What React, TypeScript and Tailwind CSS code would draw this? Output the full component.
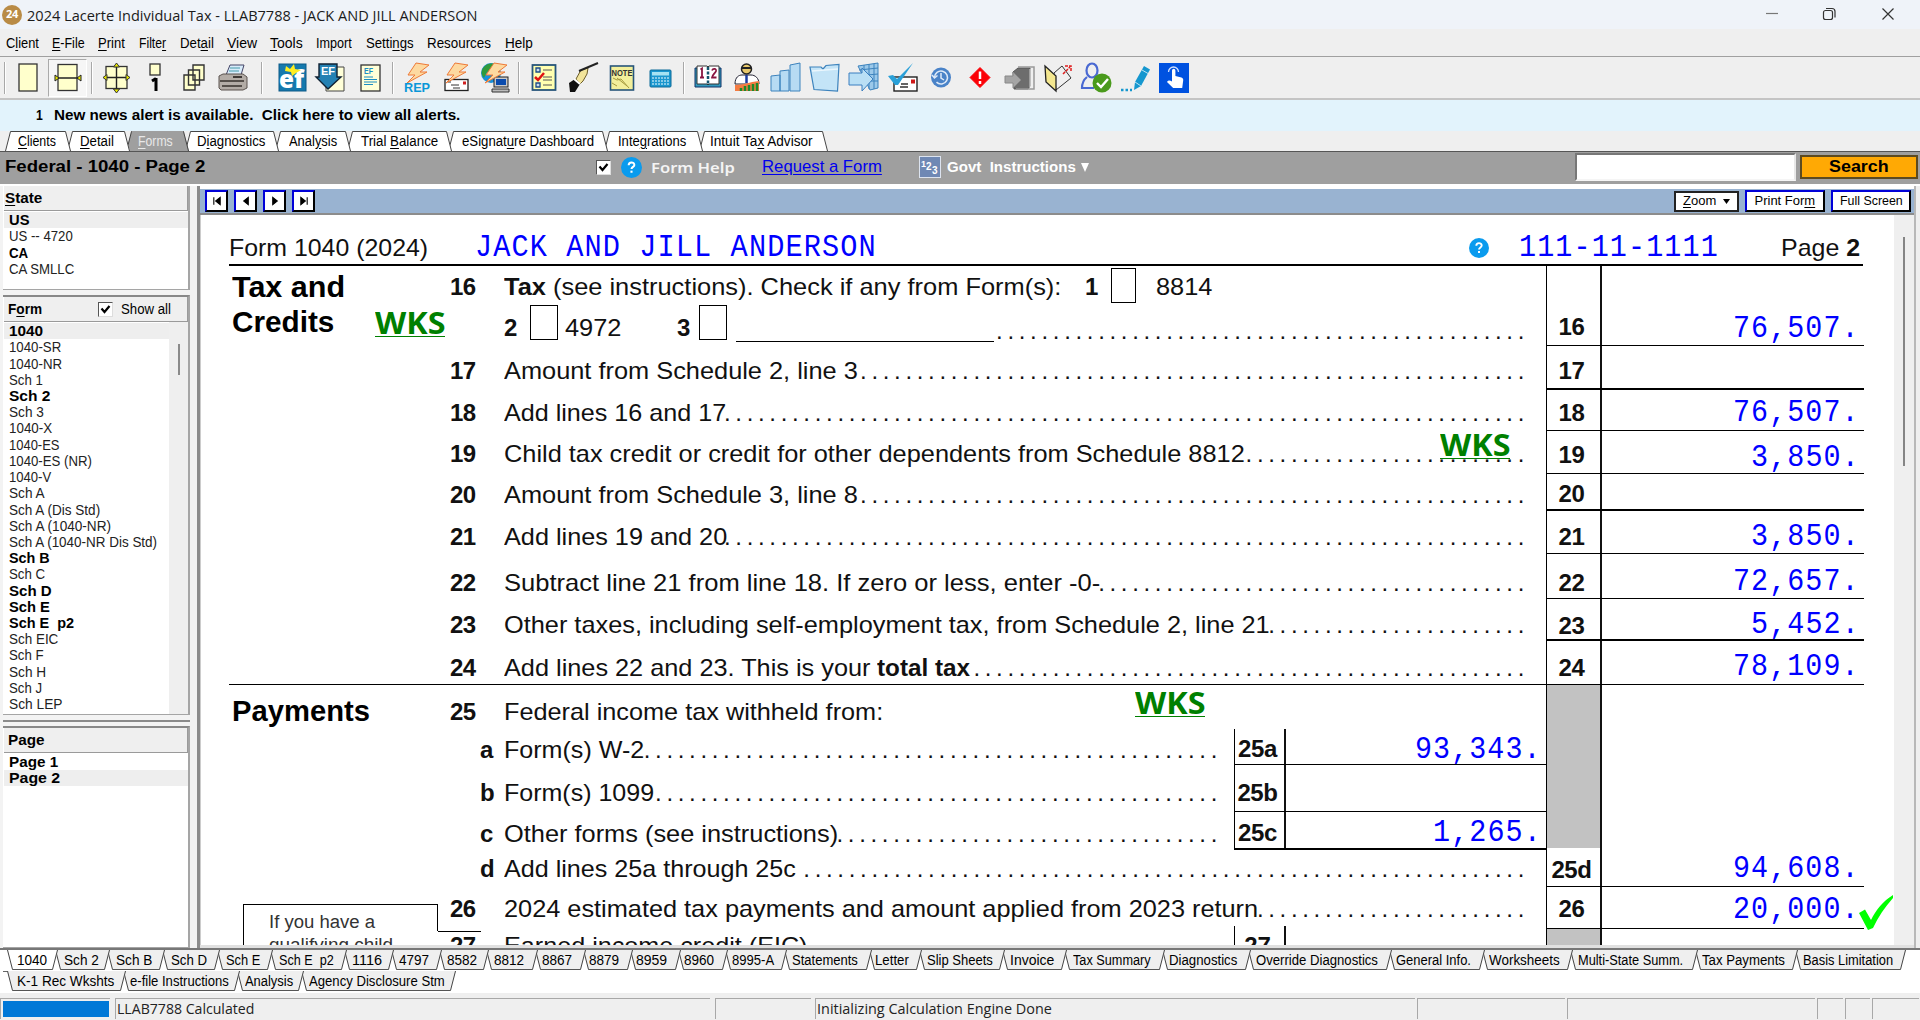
import { useLayoutEffect, useRef, useState, type ReactNode } from "react";

const UI = "font-['Liberation_Sans',Arial,sans-serif]";
const MONO = "font-['Liberation_Mono','Courier_New',monospace] text-[31px] leading-[24px] text-[#0000ff] tracking-[1.2px]";

/* Text stretched or condensed horizontally to fill the width of its box. */
function Fit({ className = "", children }: { className?: string; children: ReactNode }) {
  const outer = useRef<HTMLSpanElement>(null);
  const inner = useRef<HTMLSpanElement>(null);
  const [scale, setScale] = useState(1);
  useLayoutEffect(() => {
    if (outer.current && inner.current && inner.current.offsetWidth > 0) {
      setScale(outer.current.offsetWidth / inner.current.offsetWidth);
    }
  }, []);
  return (
    <span ref={outer} className={"block shrink-0 whitespace-pre " + className}>
      <span ref={inner} className="inline-block origin-left" style={{ transform: `scaleX(${scale})` }}>
        {children}
      </span>
    </span>
  );
}

/* "&" marks the mnemonic letter. */
function Mn({ t }: { t: string }) {
  const i = t.indexOf("&");
  if (i < 0) return <>{t}</>;
  return (
    <>
      {t.slice(0, i)}
      <span className="underline underline-offset-2">{t[i + 1]}</span>
      {t.slice(i + 2)}
    </>
  );
}

/* ---------- title and menu ---------- */

function TitleBar() {
  return (
    <div className="flex h-[29px] shrink-0 items-center bg-[#eff3f9] pl-[2px]">
      <div className="flex size-[20px] items-center justify-center rounded-full bg-[#b98b46] font-['Open_Sans'] text-[11px] font-bold tracking-tight text-white">24</div>
      <Fit className="ml-[5px] w-[450px] font-['Open_Sans'] text-[15px] leading-[18px] text-[#1b1b1b]">2024 Lacerte Individual Tax - LLAB7788 - JACK AND JILL ANDERSON</Fit>
      <svg className="mr-[21px] mb-[2px] ml-auto h-[16px] w-[134px]" viewBox="0 0 134 16" fill="none" stroke="#333" strokeWidth="1.2">
        <path d="M1 7.5h12" stroke="#777" />
        <rect x="58.500" y="4.500" width="9" height="9" rx="2" />
        <path d="M61 2.500h6a3 3 0 0 1 3 3v6" />
        <path d="M117.500 2.500l11 11M128.500 2.500l-11 11" />
      </svg>
    </div>
  );
}

const MENU = [
  ["C&lient", "ml-[6px] w-[33px]"],
  ["&E-File", "ml-[13px] w-[33px]"],
  ["&Print", "ml-[13px] w-[27px]"],
  ["Filte&r", "ml-[14px] w-[27px]"],
  ["Det&ail", "ml-[14px] w-[34px]"],
  ["&View", "ml-[13px] w-[30px]"],
  ["&Tools", "ml-[13px] w-[33px]"],
  ["Import", "ml-[13px] w-[36px]"],
  ["Setti&ngs", "ml-[14px] w-[48px]"],
  ["Resources", "ml-[13px] w-[64px]"],
  ["&Help", "ml-[14px] w-[28px]"],
];

/* ---------- toolbar ---------- */

function Ic({ children, className = "w-[39px]" }: { children: ReactNode; className?: string }) {
  return (
    <div className={"flex h-[40px] shrink-0 items-center justify-center " + className}>
      <svg className="size-[30px] overflow-visible" viewBox="0 0 30 30" fill="none">
        {children}
      </svg>
    </div>
  );
}
const Sep = ({ className }: { className: string }) => (
  <div className={"flex h-[32px] shrink-0 justify-center " + className}>
    <div className="w-px bg-[#a8a8a8]" />
    <div className="w-px bg-white" />
  </div>
);
const BOLT = "M14 0L27 2L18 9L25 9L5 20L13 12L6 12Z";

function Toolbar() {
  return (
    <div className="flex h-[42px] shrink-0 items-center border-t border-[#a0a0a0] bg-[#efefef]">
      <Sep className="w-[9px]" />
      <Ic className="w-[38px]">
        <rect x="6" y="1" width="18" height="27" fill="#ffffcc" stroke="#333" strokeWidth="1.3" />
      </Ic>
      <div className="ml-px flex h-[38px] items-center border border-r-white border-b-white border-l-[#aaa] border-t-[#aaa] bg-[#f6f6f6]">
        <Ic className="w-[37px]">
          <rect x="5" y="1.500" width="19" height="26" fill="#ffffcc" stroke="#333" strokeWidth="1.3" />
          <path d="M3 15h24" stroke="#222" strokeWidth="1.5" />
          <path d="M2 12l4 3-4 3zM28 12l-4 3 4 3z" fill="#e8e800" stroke="#222" />
        </Ic>
      </div>
      <Sep className="w-[9px]" />
      <Ic>
        <rect x="5" y="3.500" width="21" height="22" fill="#ffffcc" stroke="#333" strokeWidth="1.3" />
        <path d="M3 14.500h24M15.500 2v26" stroke="#222" strokeWidth="1.4" />
        <path d="M2 14.500l4-3v6zM29 14.500l-4-3v6zM15.500 0l3 4h-6zM15.500 30l3-4h-6z" fill="#e8e800" stroke="#333" />
      </Ic>
      <Ic>
        <rect x="10" y="1" width="10" height="11" fill="#ffffcc" stroke="#333" strokeWidth="1.3" />
        <path d="M16 15v13M12 18l4-2.500" stroke="#000" strokeWidth="3" />
      </Ic>
      <Ic>
        <path d="M14 2h11v15H14zM9.500 7h11v15h-11zM5 12h11v15H5z" fill="#ffffcc" stroke="#333" strokeWidth="1.4" />
      </Ic>
      <Ic>
        <path d="M8 12l4-10h14l-3 10z" fill="#d8ecfa" stroke="#446" />
        <path d="M12 5h10M11 8h10" stroke="#49a" />
        <path d="M1 13l4-2h20l4 3v11l-4 2H3l-2-2z" fill="#b3aca6" stroke="#5a534e" />
        <path d="M2 18h24M4 23h20" stroke="#37312d" strokeWidth="1.6" />
        <path d="M15 14h9" stroke="#3e3835" strokeWidth="2" />
      </Ic>
      <Sep className="w-[20px]" />
      <Ic>
        <rect x="2" y="1" width="27" height="27" fill="#1579ad" stroke="#0d5a88" />
        <text x="2" y="25" fontFamily="Open Sans" fontWeight="800" fontSize="24" fill="#fff" textLength="25" lengthAdjust="spacingAndGlyphs">ef</text>
        <path d="M9 3l4 3 4-5 1 5 6 1-5 3-4 3-1-4-6-1z" fill="#ffee22" />
      </Ic>
      <Ic>
        <path d="M14 4h14v24H10V12z" fill="#ffffd8" stroke="#444" />
        <path d="M3 1h18v13h4L12 26 0 14h3z" fill="#2481b3" stroke="#123" strokeWidth="1.4" />
        <text x="5" y="12" fontFamily="Liberation Sans" fontWeight="700" fontSize="11" fill="#fff" textLength="14">EF</text>
      </Ic>
      <Ic>
        <rect x="6" y="2" width="19" height="26" fill="#ffffd8" stroke="#333" strokeWidth="1.3" />
        <text x="9" y="11" fontFamily="Liberation Sans" fontWeight="700" fontSize="8.500" fill="#1b8ec4" textLength="9" lengthAdjust="spacingAndGlyphs">EF</text>
        <path d="M9 14h9M9 16.500h13M9 19h13M9 21.500h9" stroke="#1b8ec4" strokeWidth="1.2" />
      </Ic>
      <Sep className="w-[8px]" />
      <Ic>
        <path d={BOLT} fill="#fdd9a0" stroke="#ee7a38" />
        <text x="2" y="28.500" fontFamily="Liberation Sans" fontWeight="700" fontSize="13" fill="#0a97d8" textLength="26" lengthAdjust="spacingAndGlyphs">REP</text>
      </Ic>
      <Ic>
        <rect x="4" y="16.500" width="23" height="11" fill="#fff" stroke="#222" strokeWidth="1.3" />
        <path d="M7 19h3M10 22h8M12 25h7" stroke="#333" />
        <rect x="22" y="18.500" width="3" height="3" fill="#d02020" />
        <path d={BOLT} fill="#fdd9a0" stroke="#ee7a38" />
      </Ic>
      <Ic>
        <circle cx="11" cy="10" r="10" fill="#1890d8" />
        <path d="M3 5c4-6 11-5 14-3l-5 4-5 3-3 6C1 12 1 8 3 5z" fill="#2f9a3b" />
        <rect x="14" y="14" width="14" height="10" fill="#c9c9c9" stroke="#222" />
        <rect x="16" y="16" width="10" height="6" fill="#0b4cae" />
        <path d="M12 26h17v3H12z" fill="#bbb" stroke="#333" />
        <path d={BOLT} fill="#fdd9a0" stroke="#ee7a38" />
      </Ic>
      <Sep className="w-[10px]" />
      <Ic>
        <rect x="3.500" y="2" width="23" height="25" fill="#ffffb0" stroke="#27557a" strokeWidth="1.8" />
        <path d="M7 5h4v4H7zM7 20h4v4H7z" fill="#cde" stroke="#1c4c86" strokeWidth="1.3" />
        <path d="M14 7h9M14 14h9M14 17h9M14 22h9" stroke="#555" />
        <path d="M6 14l3 3 6-7" stroke="#e01010" strokeWidth="2.500" />
      </Ic>
      <Ic>
        <path d="M1 20l6-4 5 5-5 8H2z" fill="#111" />
        <path d="M8 16l5-9 7-2-1 6-4 7-3 3z" fill="#f2e49b" stroke="#6b5c28" />
        <path d="M6 16l6 5" stroke="#fff" strokeWidth="2" />
        <path d="M11 8l19-8" stroke="#222" strokeWidth="2" />
      </Ic>
      <Ic>
        <rect x="3.500" y="3" width="23" height="24" fill="#f3ef9b" stroke="#27557a" strokeWidth="1.6" />
        <text x="4.500" y="13" fontFamily="Liberation Sans" fontWeight="700" fontSize="9.500" fill="#333" textLength="21" lengthAdjust="spacingAndGlyphs">NOTE</text>
        <path d="M6 15l4 2 4-1 8 9M10 15l10 8M5 20l5 3" stroke="#a69b3d" />
      </Ic>
      <Ic>
        <rect x="4" y="7" width="21" height="17" rx="1" fill="#1b97cf" stroke="#0d6a98" />
        <rect x="6" y="9" width="17" height="3.500" fill="#a5e2f2" />
        <path d="M6 15h17M6 18h17M6 21h17" stroke="#a9dcf0" strokeWidth="1.500" strokeDasharray="2 1" />
      </Ic>
      <Sep className="w-[8px]" />
      <Ic>
        <path d="M2 5h26v19H2z" fill="#3199bd" stroke="#136" />
        <path d="M4 3h10l1 1 1-1h10v18H16l-1 1-1-1H4z" fill="#fff" stroke="#333" />
        <path d="M15 4v18" stroke="#14556e" strokeWidth="2.500" strokeDasharray="3 1.500" />
        <path d="M7.500 6.500l1.500-1v9M7 14.500h4M19 7.500c1-2.500 4.500-2 4 .5-.5 2-4 4-4 6.500h4.500" stroke="#8a1540" strokeWidth="1.800" />
      </Ic>
      <Ic>
        <circle cx="14.500" cy="6" r="5" fill="#e8c86a" stroke="#222" strokeWidth="1.500" />
        <path d="M10 5h9" stroke="#222" strokeWidth="2" />
        <path d="M3 21c0-7 4-9 7-9h9c4 0 8 3 8 9z" fill="#fff" stroke="#223" />
        <path d="M14.500 12v8" stroke="#1c3da0" strokeWidth="2.500" />
        <path d="M3 22c9 0 14-3 24-4v10H3z" fill="#f47b42" />
        <path d="M9 28v-3M13 28v-5M17 28v-6M21 28v-7M25 28v-8" stroke="#1d8a2a" strokeWidth="2.500" />
      </Ic>
      <Ic>
        <path d="M0 13l9-1v16H0zM9 8l9-1v21H9zM19 2l10-2v28H19z" fill="#b7dbf3" stroke="#3d83bd" />
      </Ic>
      <Ic>
        <path d="M0 4h11l2 2 3-3.500L29 1.500 27.500 28 4 26.500z" fill="#c4e4f7" stroke="#3d83bd" strokeWidth="1.200" />
        <path d="M2 8l26-2" stroke="#eaf6fd" strokeWidth="1.500" />
      </Ic>
      <Ic>
        <path d="M9 3l20-3v25l-8 2z" fill="#9cc9ea" stroke="#3d83bd" />
        <path d="M15 2v10M20 1v25M25 1v25M10 7l19-2M18 12l11-1M22 18h7" stroke="#3d83bd" />
        <path d="M0 10h13V5l11 11-11 12v-6H0z" fill="#b9dff5" stroke="#3a7fc0" />
      </Ic>
      <Ic>
        <rect x="6" y="14" width="23" height="14" fill="#fff" stroke="#222" strokeWidth="1.4" />
        <rect x="23" y="16.500" width="4" height="4" fill="#d01818" />
        <path d="M9 17h4M13 21h7M12 24h8" stroke="#333" strokeWidth="1.3" />
        <path d="M0 13l5-1 4 4L25 0 10 22H7z" fill="#2aa0d8" />
      </Ic>
      <Ic>
        <circle cx="14" cy="14.500" r="10" fill="#4a83c8" />
        <path d="M7.500 14.500a6.500 6.500 0 1 1 2 4.700" stroke="#dfeaf8" strokeWidth="1.600" />
        <path d="M14 10v5l3 2M5 12l2.500 3 3-2.500" stroke="#dfeaf8" strokeWidth="1.500" />
      </Ic>
      <Ic>
        <path d="M14 4.500l10 10L14 24.500 4 14.500z" fill="#fb0207" stroke="#fb0207" strokeLinejoin="round" />
        <path d="M14 8.500v7.500M14 18v3" stroke="#fff" strokeWidth="2.500" />
      </Ic>
      <Ic>
        <path d="M8 9l5-4h12v18l-2 3H9z" fill="#6d6d6d" stroke="#555" />
        <path d="M13 4h16v22H11" stroke="#999" strokeWidth="1.500" />
        <path d="M25 6v18" stroke="#ddd" />
        <path d="M0 13h8V9l8 8-8 8v-5H0z" fill="#a5a5a5" stroke="#888" />
      </Ic>
      <Ic>
        <path d="M10 10l8-7 9 12-15 12z" fill="#f0f0f0" stroke="#333" />
        <path d="M1 3l11 10v15L2 19z" fill="#f4e78f" stroke="#222" strokeWidth="1.300" />
        <path d="M19 11l7-7M21 3h6v6" stroke="#e02020" strokeWidth="1.500" strokeDasharray="3 1" />
      </Ic>
      <Ic className="w-[38px]">
        <ellipse cx="10" cy="7.500" rx="5.500" ry="7" stroke="#4a69d2" strokeWidth="2.200" />
        <path d="M5 14c-5 4-5 8-5 11h12" stroke="#4a69d2" strokeWidth="2.200" />
        <circle cx="20" cy="20" r="9.500" fill="#4a9a1c" />
        <path d="M15 20l4 4 7-8" stroke="#fff" strokeWidth="2.400" />
      </Ic>
      <Ic>
        <path d="M14 19L23 3l6 3.500L20 23l-7 4z" fill="#1597cf" />
        <path d="M14 19l6 4M21 7l6 3.500" stroke="#bfe6f6" />
        <path d="M0 27h11" stroke="#1597cf" strokeWidth="2.500" strokeDasharray="2.500 2" />
      </Ic>
      <Ic className="w-[38px]">
        <rect x="0" y="0" width="30" height="30" fill="#0052e0" />
        <path d="M13 17V7.500a1.700 1.700 0 0 1 3.400 0V13l6 1.500c1.500.5 2 1.500 1.800 3l-1 7.500h-9L8 19c1-2 3-2 5-.5z" fill="#fff" />
        <path d="M9.500 9a5 5 0 1 1 10 0" stroke="#cfe0ff" strokeWidth="1.300" />
      </Ic>
    </div>
  );
}

/* ---------- top tabs and form header strip ---------- */

const TOP_TABS = [
  ["&Clients", "w-[62px] pl-[13px]", "w-[38px]"],
  ["&Detail", "w-[59px] pl-[13px]", "w-[34px]"],
  ["&Forms", "w-[59px] pl-[12px]", "w-[35px]"],
  ["D&iagnostics", "w-[90px] pl-[12px]", "w-[68px]"],
  ["Anal&ysis", "w-[72px] pl-[14px]", "w-[48px]"],
  ["Trial &Balance", "w-[101px] pl-[14px]", "w-[77px]"],
  ["eSignat&ure Dashboard", "w-[156px] pl-[14px]", "w-[132px]"],
  ["Inte&grations", "w-[95px] pl-[14px]", "w-[68px]"],
  ["Intuit Ta&x Advisor", "w-[125px] pl-[11px]", "w-[103px]"],
];

function TopTabs() {
  return (
    <div className="flex h-[21px] shrink-0 border-b border-[#555] bg-[#efefef] pl-[5px]">
      {TOP_TABS.map(([label, slot, width], i) => {
        const active = i === 2;
        const fill = active ? "#9f9f9f" : "#ffffff";
        return (
          <div key={label} className={"relative flex h-[20px] shrink-0 items-center " + slot} style={{ zIndex: TOP_TABS.length - i }}>
            <div className="absolute inset-y-0 -right-[4px] left-0 flex">
              <svg className="h-[20px] w-[6px]" viewBox="0 0 6 20"><path d="M0 20L5.500 .5H6V20z" fill={fill} /><path d="M.5 20L5.500 .5H6" stroke="#444" fill="none" /></svg>
              <div className={"flex-1 border-t " + (active ? "border-[#9f9f9f] bg-[#9f9f9f]" : "border-[#444] bg-white")} />
              <svg className="h-[20px] w-[6px]" viewBox="0 0 6 20"><path d="M0 .5H.5L6 20H0z" fill={fill} /><path d="M0 .5H.5L5.500 20" stroke="#444" fill="none" /></svg>
            </div>
            <Fit className={"relative text-[14px] leading-[18px] " + width + (active ? " text-[#e8e8e8]" : " text-black")}>
              <Mn t={label} />
            </Fit>
          </div>
        );
      })}
    </div>
  );
}

function Help({ className }: { className: string }) {
  return (
    <svg className={"shrink-0 " + className} viewBox="0 0 20 20">
      <circle cx="10" cy="10" r="10" fill="#0a9bee" />
      <path d="M7.300 7.800c0-3.600 5.400-3.400 5.400-.3 0 1.800-2.700 2-2.700 4" fill="none" stroke="#fff" strokeWidth="1.900" />
      <rect x="9" y="13" width="2" height="2" fill="#fff" />
    </svg>
  );
}

function Check({ className }: { className: string }) {
  return (
    <div className={"size-[15px] shrink-0 border border-t-[#555] border-r-[#ddd] border-b-[#ddd] border-l-[#555] bg-white " + className}>
      <svg viewBox="0 0 13 13" className="size-[13px]"><path d="M2.500 5.500l3 3.500L10.500 3" fill="none" stroke="#000" strokeWidth="2.200" /></svg>
    </div>
  );
}

function FormStrip() {
  return (
    <div className="flex h-[32px] shrink-0 items-center bg-[#9f9f9f] pb-[2px] pl-[5px]">
      <Fit className="w-[201px] text-[16px] leading-[20px] font-bold">Federal - 1040 - Page 2</Fit>
      <Check className="ml-[390px]" />
      <Help className="ml-[10px] size-[21px]" />
      <Fit className="ml-[9px] w-[84px] font-['Noto_Sans'] text-[15px] leading-[20px] font-semibold text-[#f4f4f4]">Form Help</Fit>
      <Fit className="ml-[27px] w-[120px] text-[17px] leading-[20px] text-[#0000ee]">
        <span className="underline underline-offset-2">Request a Form</span>
      </Fit>
      <svg className="ml-[37px] size-[22px] shrink-0" viewBox="0 0 22 22">
        <rect x=".5" y=".5" width="21" height="21" fill="#6f88b4" stroke="#dce3ef" />
        <text x="2" y="11" fontFamily="Liberation Sans" fontWeight="700" fontSize="9" fill="#fff">1</text>
        <text x="7" y="14" fontFamily="Liberation Sans" fontWeight="700" fontSize="10" fill="#fff">2</text>
        <text x="13" y="17.500" fontFamily="Liberation Sans" fontWeight="700" fontSize="10" fill="#fff">3</text>
      </svg>
      <Fit className="ml-[6px] w-[129px] text-[14px] leading-[20px] font-bold text-white">{"Govt  Instructions"}</Fit>
      <svg className="ml-[5px] h-[9px] w-[8px]" viewBox="0 0 8 9"><path d="M0 0h8L4 9z" fill="#fff" /></svg>
      <div className="mr-[4px] ml-auto h-[28px] w-[221px] border-2 border-t-[#777] border-r-[#e8e8e8] border-b-[#f5f5f5] border-l-[#777] bg-white" />
      <div className="mr-[2px] flex h-[24px] w-[118px] items-center justify-center border-2 border-[#5c4a20] bg-[#ffa904]">
        <Fit className="w-[60px] text-[17px] leading-[18px] font-bold">Search</Fit>
      </div>
    </div>
  );
}

/* ---------- sidebar ---------- */

type Item = [label: string, width: string, bold?: boolean, selected?: boolean];

const STATES: Item[] = [
  ["US", "w-[20px]", true, true],
  ["US -- 4720", "w-[64px]"],
  ["CA", "w-[19px]", true],
  ["CA SMLLC", "w-[65px]"],
];

const FORMS: Item[] = [
  ["1040", "w-[34px]", true, true],
  ["1040-SR", "w-[52px]"],
  ["1040-NR", "w-[53px]"],
  ["Sch 1", "w-[34px]"],
  ["Sch 2", "w-[41px]", true],
  ["Sch 3", "w-[35px]"],
  ["1040-X", "w-[43px]"],
  ["1040-ES", "w-[50px]"],
  ["1040-ES (NR)", "w-[83px]"],
  ["1040-V", "w-[42px]"],
  ["Sch A", "w-[36px]"],
  ["Sch A (Dis Std)", "w-[91px]"],
  ["Sch A (1040-NR)", "w-[102px]"],
  ["Sch A (1040-NR Dis Std)", "w-[148px]"],
  ["Sch B", "w-[41px]", true],
  ["Sch C", "w-[36px]"],
  ["Sch D", "w-[43px]", true],
  ["Sch E", "w-[41px]", true],
  ["Sch E  p2", "w-[65px]", true],
  ["Sch EIC", "w-[49px]"],
  ["Sch F", "w-[35px]"],
  ["Sch H", "w-[37px]"],
  ["Sch J", "w-[33px]"],
  ["Sch LEP", "w-[53px]"],
];

const PAGES: Item[] = [
  ["Page 1", "w-[49px]", true],
  ["Page 2", "w-[51px]", true, true],
];

function List({ items, className = "" }: { items: Item[]; className?: string }) {
  return (
    <div className={"pt-px " + className}>
      {items.map(([label, width, bold, selected]) => (
        <div key={label} className={"flex h-[16.230px] items-center pl-[5px] " + (selected ? "bg-[#eeeeee]" : "")}>
          <Fit className={"text-[14px] leading-[16px] " + width + (bold ? " font-bold text-black" : " text-[#222]")}>{label}</Fit>
        </div>
      ))}
    </div>
  );
}

function PanelHead({ className = "", children }: { className?: string; children: ReactNode }) {
  return <div className={"flex h-[25px] shrink-0 items-center border-r border-b border-[#9a9a9a] bg-[#efefef] pt-px pl-[4px] " + className}>{children}</div>;
}

function Sidebar() {
  const panel = "flex shrink-0 flex-col border-r-2 border-b border-[#a5a5a5] bg-white ml-[3px] w-[187px] pl-px";
  return (
    <div className="w-[197px] shrink-0 bg-[#f3f3f3]">
      <div className={panel + " h-[104px]"}>
        <PanelHead className="pl-px">
          <Fit className="w-[37px] text-[14px] font-bold"><Mn t="&State" /></Fit>
        </PanelHead>
        <List items={STATES} />
      </div>
      <div className={panel + " mt-[5px] h-[420px] border-t-2 border-t-[#888]"}>
        <PanelHead>
          <Fit className="w-[34px] text-[14px] font-bold"><Mn t="F&orm" /></Fit>
          <Check className="ml-[56px]" />
          <Fit className="ml-[8px] w-[50px] text-[14px]">Show all</Fit>
        </PanelHead>
        <div className="flex min-h-0 flex-1">
          <List items={FORMS} className="w-[165px]" />
          <div className="flex flex-1 justify-center bg-[#efefef] pt-[22px]">
            <div className="h-[31px] w-[2px] bg-[#8a8a8a]" />
          </div>
        </div>
      </div>
      <div className="mt-[5px] ml-[3px] h-[2px] w-[187px] bg-[#8a8a8a]" />
      <div className={panel + " mt-[4px] h-[222px] border-t-2 border-t-[#888]"}>
        <PanelHead>
          <Fit className="w-[36px] text-[14px] font-bold">Pa<span className="underline">g</span>e</Fit>
        </PanelHead>
        <List items={PAGES} />
      </div>
    </div>
  );
}

/* ---------- tax form ---------- */

const NAV = ["M2 1v8M9 1L4 5l5 4z", "M8 1L3 5l5 4z", "M3 1l5 4-5 4z", "M2 1l5 4-5 4zM9 1v8"];

function NavBar() {
  const blue = "border-2 border-t-[#0000d8] border-r-black border-b-black border-l-[#0000d8]";
  return (
    <div className="flex h-[26px] shrink-0 items-center border-b-2 border-[#8c8c8c] bg-[#99b3d1] pl-[5px]">
      {NAV.map((d) => (
        <div key={d} className={"mr-[6px] flex h-[22px] w-[23px] items-center justify-center bg-white " + blue}>
          <svg className="size-[10px]" viewBox="0 0 11 10"><path d={d} fill="#000" stroke="#000" strokeWidth="1.200" /></svg>
        </div>
      ))}
      <div className="ml-auto flex h-[21px] w-[65px] items-center justify-center border-2 border-[#222] bg-white">
        <Fit className="w-[33px] text-[13px] leading-[16px]"><Mn t="&Zoom" /></Fit>
        <svg className="ml-[7px] h-[5px] w-[7px]" viewBox="0 0 7 5"><path d="M0 0h7L3.500 5z" /></svg>
      </div>
      <div className={"ml-[6px] flex h-[22px] w-[80px] items-center justify-center bg-white " + blue}>
        <Fit className="w-[61px] text-[13px] leading-[16px]"><Mn t="Print For&m" /></Fit>
      </div>
      <div className={"mr-[3px] ml-[6px] flex h-[22px] w-[80px] items-center justify-center bg-white " + blue}>
        <Fit className="w-[63px] text-[13px] leading-[16px]">Full Screen</Fit>
      </div>
    </div>
  );
}

function Wks({ className }: { className: string }) {
  return (
    <Fit className={"h-[27px] border-b border-[#008000] font-['Open_Sans'] text-[30px] leading-[25px] font-bold text-[#008000] " + className}>WKS</Fit>
  );
}

/* Dot leader: as many dots as the free width of the line holds. */
const DOT_PITCH = 11.34;
function Dots({ className = "mr-[17px]" }: { className?: string }) {
  const box = useRef<HTMLDivElement>(null);
  const [count, setCount] = useState(0);
  useLayoutEffect(() => {
    if (box.current) setCount(Math.floor((box.current.offsetWidth + 5) / DOT_PITCH));
  }, []);
  return (
    <div ref={box} className={"flex h-[24px] min-w-0 flex-1 justify-end text-[24px] leading-[24px] tracking-[4.670px] whitespace-nowrap " + className}>
      {".".repeat(count)}
    </div>
  );
}

function Row({ n, h, letter, children }: { n: string; h: string; letter?: boolean; children: ReactNode }) {
  return (
    <div className={"relative flex shrink-0 items-end " + h}>
      <span className={"w-[56px] shrink-0 font-bold " + (letter ? "pl-[32px]" : "pl-[2px] tracking-[-0.5px]")}>{n}</span>
      {children}
    </div>
  );
}

const Box = ({ className }: { className: string }) => <div className={"h-[35px] shrink-0 border-[1.500px] border-black bg-white " + className} />;

type Cell = { n: string; v?: string; h: string; np: string; vp?: string };

const CELLS_TOP: Cell[] = [
  { n: "16", v: "76,507.", h: "h-[80px] border-b", np: "pb-[6px]", vp: "pb-[4px]" },
  { n: "17", h: "h-[44px] border-b-2", np: "pb-[5px]" },
  { n: "18", v: "76,507.", h: "h-[41px] border-b", np: "pb-[5px]", vp: "pb-[5px]" },
  { n: "19", v: "3,850.", h: "h-[43px] border-b", np: "pb-[6px]", vp: "pb-[3px]" },
  { n: "20", h: "h-[37px] border-b-2", np: "pb-[3px]" },
  { n: "21", v: "3,850.", h: "h-[43px] border-b", np: "pb-[4px]", vp: "pb-[4px]" },
  { n: "22", v: "72,657.", h: "h-[45px] border-b", np: "pb-[3px]", vp: "pb-[4px]" },
  { n: "23", v: "5,452.", h: "h-[42px] border-b-2", np: "pb-[1px]", vp: "pb-[2px]" },
  { n: "24", v: "78,109.", h: "h-[44px] border-b", np: "pb-[4px]", vp: "pb-[5px]" },
];
const CELLS_BOTTOM: Cell[] = [
  { n: "25d", v: "94,608.", h: "h-[39px] border-b", np: "pb-[4px]", vp: "pb-[5px]" },
  { n: "26", v: "20,000.", h: "h-[42px] border-b", np: "pb-[7px]", vp: "pb-[6px]" },
];
const CELLS_SUB: Cell[] = [
  { n: "25a", v: "93,343.", h: "h-[36px] border-b", np: "pb-[3px]", vp: "pb-[2px]" },
  { n: "25b", h: "h-[47px] border-b", np: "pb-[6px]" },
  { n: "25c", v: "1,265.", h: "h-[38px] border-b-2", np: "pb-[3px]", vp: "pb-[3px]" },
];

function Cells({ cells, first, last }: { cells: Cell[]; first: string; last: string }) {
  return (
    <>
      {cells.map((c) => (
        <div key={c.n} className={"flex shrink-0 border-black " + c.h}>
          <div className={"flex items-end justify-center border-l border-black pr-[4px] font-bold tracking-[-0.4px] " + first + " " + c.np}>{c.n}</div>
          <div className={"flex flex-1 items-end justify-end border-l-2 border-[#111] " + MONO + " " + last + " " + (c.vp ?? "")}>
            {c.v && <Fit className={c.v.length === 7 ? "w-[127px]" : "w-[109px]"}>{c.v}</Fit>}
          </div>
        </div>
      ))}
    </>
  );
}

const Gray = ({ h }: { h: string }) => (
  <div className={"flex shrink-0 " + h}>
    <div className="w-[54px] border-l border-black bg-[#c2c2c2]" />
    <div className="flex-1 border-l-2 border-[#111]" />
  </div>
);

function TaxForm() {
  return (
    <div className="relative flex-1 overflow-hidden bg-white pl-[28px] text-[24px] leading-[24px] text-[#111]">
      <div className="flex h-[51px] w-[1634px] items-end border-b-2 border-black pr-[3px] pb-[4px]">
        <Fit className="w-[199px]">Form 1040 (2024)</Fit>
        <Fit className={"ml-[47px] w-[402px] " + MONO}>JACK AND JILL ANDERSON</Fit>
        <Help className="mr-[30px] mb-[2px] ml-auto size-[20px]" />
        <Fit className={"w-[200px] " + MONO}>111-11-1111</Fit>
        <Fit className="ml-[62px] w-[79px]">Page <b>2</b></Fit>
      </div>
      <div className="flex h-[680px] w-[1635px]">
        <div className="w-[1317px] shrink-0">
          <div className="flex h-[419px] border-b border-black">
            <div className="w-[219px] shrink-0 pt-[4px] pl-[3px]">
              <Fit className="w-[113px] text-[30px] leading-[34px] font-bold text-black">Tax and</Fit>
              <div className="flex">
                <Fit className="w-[102px] text-[30px] leading-[36px] font-bold text-black">Credits</Fit>
                <Wks className="mt-[6px] ml-[41px] w-[70px]" />
              </div>
            </div>
            <div className="min-w-0 flex-1">
              <Row n="16" h="h-[33px]">
                <Fit className="w-[557px]"><b>Tax</b> (see instructions). Check if any from Form(s):</Fit>
                <b className="ml-[24px]">1</b>
                <Box className="mb-[-4px] ml-[13px] w-[25px]" />
                <Fit className="ml-[20px] w-[56px]">8814</Fit>
              </Row>
              <Row n="" h="h-[41px]">
                <b className="w-[26px]">2</b>
                <Box className="w-[28px]" />
                <Fit className="ml-[7px] w-[56px]">4972</Fit>
                <b className="ml-[56px] w-[22px]">3</b>
                <Box className="w-[28px]" />
                <div className="mb-[-2px] ml-[9px] w-[258px] border-b border-black" />
                <Dots className="mr-[17px] mb-[-3px]" />
              </Row>
              <Row n="17" h="h-[43px]"><Fit className="w-[354px]">Amount from Schedule 2, line 3</Fit><Dots /></Row>
              <Row n="18" h="h-[42px]"><Fit className="w-[222px]">Add lines 16 and 17</Fit><Dots /></Row>
              <Row n="19" h="h-[41px]">
                <Fit className="w-[741px]">Child tax credit or credit for other dependents from Schedule 8812</Fit>
                <Dots />
                <Wks className="absolute top-[7px] left-[992px] w-[70px]" />
              </Row>
              <Row n="20" h="h-[41px]"><Fit className="w-[354px]">Amount from Schedule 3, line 8</Fit><Dots /></Row>
              <Row n="21" h="h-[42px]"><Fit className="w-[223px]">Add lines 19 and 20</Fit><Dots /></Row>
              <Row n="22" h="h-[46px]"><Fit className="w-[596px]">Subtract line 21 from line 18. If zero or less, enter -0-</Fit><Dots /></Row>
              <Row n="23" h="h-[42px]"><Fit className="w-[766px]">Other taxes, including self-employment tax, from Schedule 2, line 21</Fit><Dots /></Row>
              <Row n="24" h="h-[43px]">
                <Fit className="w-[373px]">{"Add lines 22 and 23. This is your "}</Fit>
                <Fit className="w-[93px] font-bold">total tax</Fit>
                <Dots />
              </Row>
            </div>
          </div>
          <div className="flex">
            <div className="w-[219px] shrink-0">
              <Fit className="mt-[8px] ml-[3px] h-[30px] w-[138px] text-[29px] leading-[36px] font-bold text-black">Payments</Fit>
              <div className="mt-[181px] ml-[14px] h-[60px] w-[195px] border-t border-l border-black">
                <div className="flex h-[26px] items-end border-r border-black pl-[25px]">
                  <Fit className="w-[106px] text-[18px] leading-[18px] text-[#333]">If you have a</Fit>
                </div>
                <div className="relative ml-[194px] w-[43px] border-t border-black" />
                <Fit className="ml-[25px] w-[124px] text-[18px] leading-[26px] text-[#333]">qualifying child</Fit>
              </div>
            </div>
            <div className="min-w-0 flex-1">
              <Row n="25" h="h-[39px]">
                <Fit className="w-[379px]">Federal income tax withheld from:</Fit>
                <Wks className="absolute top-[5px] left-[687px] w-[70px]" />
              </Row>
              <div className="flex h-[122px]">
                <div className="w-[786px] shrink-0">
                  <Row letter n="a" h="h-[38px]"><Fit className="w-[140px]">Form(s) W-2</Fit><Dots className="mr-[12px]" /></Row>
                  <Row letter n="b" h="h-[43px]"><Fit className="w-[150px]">Form(s) 1099</Fit><Dots className="mr-[12px]" /></Row>
                  <Row letter n="c" h="h-[41px]"><Fit className="w-[334px]">Other forms (see instructions)</Fit><Dots className="mr-[12px]" /></Row>
                </div>
                <div className="mt-[5px] flex-1">
                  <Cells cells={CELLS_SUB} first="w-[50px]" last="pr-[4px]" />
                </div>
              </div>
              <Row letter n="d" h="h-[35px]"><Fit className="mr-[3px] w-[292px]">Add lines 25a through 25c</Fit><Dots /></Row>
              <Row n="26" h="h-[40px]"><Fit className="w-[754px]">2024 estimated tax payments and amount applied from 2023 return</Fit><Dots /></Row>
              <Row n="27" h="h-[37px]">
                <Fit className="w-[303px]">Earned income credit (EIC)</Fit>
                <div className="ml-auto flex h-[32px] w-[312px]">
                  <div className="flex w-[50px] items-end justify-center border-l border-black pr-[4px] font-bold">27</div>
                  <div className="flex-1 border-l-2 border-[#111]" />
                </div>
              </Row>
            </div>
          </div>
        </div>
        <div className="flex min-w-0 flex-1 flex-col">
          <Cells cells={CELLS_TOP} first="w-[54px]" last="pr-[4px]" />
          <Gray h="h-[163px]" />
          <Cells cells={CELLS_BOTTOM} first="w-[54px]" last="pr-[4px]" />
          <Gray h="h-[17px]" />
        </div>
      </div>
      <svg className="absolute top-[680px] left-[1658px] h-[35px] w-[34px]" viewBox="0 0 34 35">
        <path d="M0 18L6 14.500L12 25C17 15 24 6 34 0V3C26 12 19 22 14 33L9 35z" fill="#00ff00" />
      </svg>
    </div>
  );
}

/* ---------- bottom tabs and status ---------- */

const BOTTOM_1 = [
  ["1040", "w-[48px] pl-[10px]", "w-[30px]"],
  ["Sch 2", "w-[52px] pl-[9px]", "w-[35px]"],
  ["Sch B", "w-[55px] pl-[9px]", "w-[36px]"],
  ["Sch D", "w-[55px] pl-[9px]", "w-[36px]"],
  ["Sch E", "w-[53px] pl-[9px]", "w-[34px]"],
  ["Sch E  p2", "w-[74px] pl-[9px]", "w-[55px]"],
  ["1116", "w-[47px] pl-[8px]", "w-[30px]"],
  ["4797", "w-[48px] pl-[8px]", "w-[30px]"],
  ["8582", "w-[47px] pl-[8px]", "w-[30px]"],
  ["8812", "w-[49px] pl-[8px]", "w-[30px]"],
  ["8867", "w-[48px] pl-[7px]", "w-[30px]"],
  ["8879", "w-[47px] pl-[6px]", "w-[30px]"],
  ["8959", "w-[48px] pl-[6px]", "w-[31px]"],
  ["8960", "w-[47px] pl-[6px]", "w-[30px]"],
  ["8995-A", "w-[59px] pl-[7px]", "w-[42px]"],
  ["Statements", "w-[85px] pl-[8px]", "w-[66px]"],
  ["Letter", "w-[50px] pl-[6px]", "w-[34px]"],
  ["Slip Sheets", "w-[83px] pl-[8px]", "w-[66px]"],
  ["Invoice", "w-[62px] pl-[8px]", "w-[44px]"],
  ["Tax Summary", "w-[98px] pl-[9px]", "w-[78px]"],
  ["Diagnostics", "w-[86px] pl-[7px]", "w-[68px]"],
  ["Override Diagnostics", "w-[141px] pl-[8px]", "w-[122px]"],
  ["General Info.", "w-[93px] pl-[7px]", "w-[75px]"],
  ["Worksheets", "w-[88px] pl-[7px]", "w-[71px]"],
  ["Multi-State Summ.", "w-[125px] pl-[8px]", "w-[105px]"],
  ["Tax Payments", "w-[100px] pl-[7px]", "w-[83px]"],
  ["Basis Limitation", "w-[108px] pl-[8px]", "w-[90px]"],
];
const BOTTOM_2 = [
  ["K-1 Rec Wkshts", "w-[116px] pl-[10px]", "w-[97px]"],
  ["e-file Instructions", "w-[114px] pl-[7px]", "w-[99px]"],
  ["Analysis", "w-[64px] pl-[8px]", "w-[48px]"],
  ["Agency Disclosure Stm", "w-[152px] pl-[8px]", "w-[136px]"],
];

function BottomTabs({ tabs, activeFirst }: { tabs: string[][]; activeFirst?: boolean }) {
  return (
    <div className="flex h-[21px] shrink-0 pl-[7px]">
      {tabs.map(([label, slot, width], i) => {
        const active = activeFirst && i === 0;
        const fill = active ? "#ffffff" : "#efefef";
        return (
          <div key={label} className={"relative flex h-[20px] shrink-0 items-center " + slot} style={{ zIndex: tabs.length - i }}>
            <div className="absolute inset-y-0 -right-[3px] left-0 flex">
              <svg className="h-[20px] w-[6px]" viewBox="0 0 6 20"><path d="M0 0H6V19.500H5.500z" fill={fill} /><path d="M.5 0L5.500 19.500H6" stroke="#444" fill="none" /></svg>
              <div className={"flex-1 border-b border-[#555] " + (active ? "bg-white" : "bg-[#efefef]")} />
              <svg className="h-[20px] w-[6px]" viewBox="0 0 6 20"><path d="M0 0H6L.5 19.500H0z" fill={fill} /><path d="M5.500 0L.5 19.500H0" stroke="#444" fill="none" /></svg>
            </div>
            <Fit className={"relative text-[14px] leading-[18px] " + width}>{label}</Fit>
          </div>
        );
      })}
    </div>
  );
}

const StatusCell = ({ className, children }: { className: string; children?: ReactNode }) => (
  <div className={"mr-[2px] flex h-[21px] shrink-0 items-center border-t border-l border-[#a8a8a8] font-['Open_Sans'] text-[14px] leading-[18px] text-[#222] " + className}>{children}</div>
);

export default function App() {
  return (
    <div className={"flex h-[1020px] w-[1920px] flex-col overflow-hidden bg-white text-black " + UI}>
      <TitleBar />
      <div className="flex h-[27px] shrink-0 items-center bg-[#efefef] pt-px">
        {MENU.map(([label, cls]) => (
          <Fit key={label} className={"text-[14px] leading-[18px] " + cls}><Mn t={label} /></Fit>
        ))}
      </div>
      <Toolbar />
      <div className="flex h-[33px] shrink-0 items-center border-t-2 border-[#c4c4c4] bg-[#e2f3fc] pl-[36px]">
        <Fit className="w-[7px] text-[14px] font-bold">1</Fit>
        <Fit className="ml-[11px] w-[406px] text-[14px] font-bold">{"New news alert is available.  Click here to view all alerts."}</Fit>
      </div>
      <TopTabs />
      <FormStrip />
      <div className="flex h-[764px] shrink-0 border-t-2 border-white bg-[#f3f3f3]">
        <Sidebar />
        <div className="flex min-w-0 flex-1 flex-col border-l-[3px] border-[#8c8c8c] bg-white pt-[3px]">
          <NavBar />
          <div className="flex min-h-0 flex-1">
            <div className="flex w-px shrink-0 bg-[#ccc]" />
            <TaxForm />
            <div className="w-[20px] shrink-0 bg-[#efefef] pt-[22px] pl-[9px]">
              <div className="h-[229px] w-[2px] bg-[#858585]" />
            </div>
          </div>
          <div className="h-[3px] shrink-0 bg-[#e0e0e0]" />
        </div>
        <div className="w-[6px] shrink-0 border-l-2 border-[#b8b8b8] bg-[#efefef]" />
      </div>
      <div className="h-[2px] shrink-0 bg-[#777]" />
      <BottomTabs tabs={BOTTOM_1} activeFirst />
      <div className="relative">
        <div className="absolute top-0 left-[3px] h-px w-[450px] bg-[#666]" />
        <BottomTabs tabs={BOTTOM_2} />
      </div>
      <div className="mt-auto flex h-[27px] shrink-0 items-end bg-[#efefef] pb-px">
        <StatusCell className="w-[110px] pl-[2px]"><div className="h-[16px] w-[106px] bg-[#0078d7]" /></StatusCell>
        <StatusCell className="ml-[3px] w-[595px] pl-[1px]"><Fit className="w-[137px]">LLAB7788 Calculated</Fit></StatusCell>
        <StatusCell className="ml-[3px] w-[96px]" />
        <StatusCell className="ml-[2px] w-[600px] pl-[1px]"><Fit className="w-[235px]">Initializing Calculation Engine Done</Fit></StatusCell>
        <StatusCell className="w-[148px]" />
        <StatusCell className="w-[248px]" />
        <StatusCell className="w-[26px]" />
        <StatusCell className="w-[25px]" />
        <StatusCell className="w-[47px]" />
      </div>
    </div>
  );
}
